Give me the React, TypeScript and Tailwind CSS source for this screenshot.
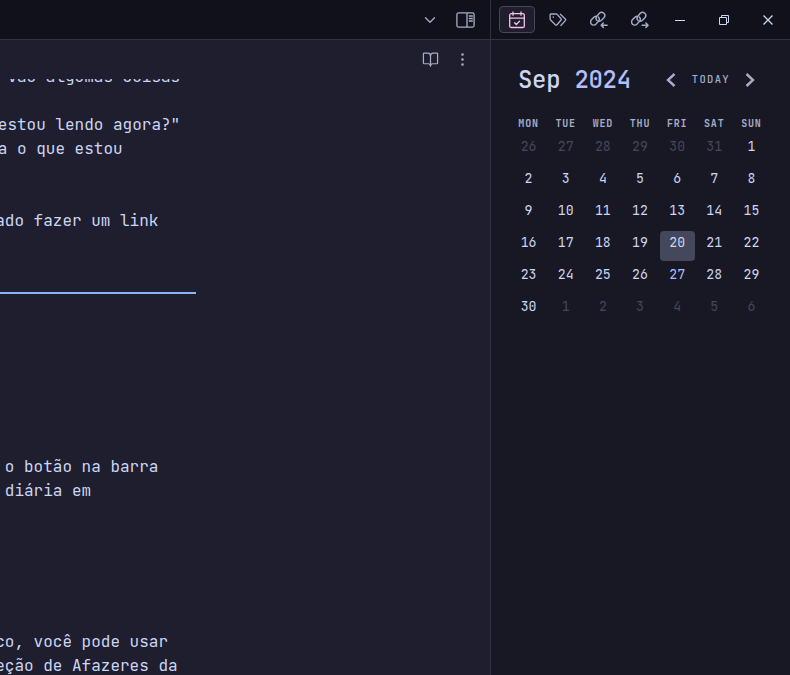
import React from "react";
import { BookOpen, ChevronDown, EllipsisVertical } from "lucide-react";

function SidebarIcon() {
  return (
    <svg width="19" height="16" viewBox="0 0 19 16" fill="none" stroke="currentColor" strokeWidth="1.3">
      <rect x="0.9" y="0.9" width="17.2" height="14.2" rx="1.5" />
      <path d="M11 1v14M12.8 4h4M12.8 6.5h4M12.8 9h4" />
    </svg>
  );
}

function CalendarIcon() {
  return (
    <svg width="18" height="18" viewBox="0 0 18 18" fill="none" stroke="currentColor" strokeWidth="1.3" strokeLinecap="round" strokeLinejoin="round">
      <rect x="1.7" y="2.7" width="14.6" height="13.8" rx="1.6" />
      <path d="M1.7 7.2h14.6M5 1v3.2M13 1v3.2M6.6 11.8l1.7 1.7 3.2-3.2" />
    </svg>
  );
}

function TagsIcon() {
  return (
    <svg width="18" height="18" viewBox="0 0 18 18" fill="none" stroke="currentColor" strokeWidth="1.3" strokeLinecap="round" strokeLinejoin="round">
      <path d="M1.1 3.9q0-.9.9-.9h5.1q.6 0 1 .4l4 4.4q.5.6 0 1.2l-4.3 5q-.6.5-1.2 0L1.6 9q-.5-.5-.5-1z" />
      <path d="M11.4 3.3l5.1 4.9q.6.6 0 1.2l-4.6 5.1" />
      <circle cx="4.3" cy="6.1" r="0.8" fill="currentColor" stroke="none" />
    </svg>
  );
}

function LinkIcon({ outgoing = false }: { outgoing?: boolean }) {
  return (
    <svg width="18" height="18" viewBox="0 0 100 100" fill="none" stroke="currentColor" strokeWidth="8" strokeLinecap="round" strokeLinejoin="round">
      <path d="M39 53A18 18 0 0 1 38 29L52 13A17 17 0 0 1 77 37L65 50Q59 56 52 57" />
      <path d="M46 33A18 18 0 0 1 47 57L33 73A17 17 0 0 1 8 49L20 36Q26 30 33 29" />
      {outgoing ? <path d="M62 79H95M83 67L95 79L83 91" /> : <path d="M95 79H62M74 67L62 79L74 91" />}
    </svg>
  );
}

function Toolbar() {
  return (
    <header className="flex h-10 shrink-0 border-b border-[#313244] bg-[#11111b] text-[#a6adc8]">
      <div className="flex w-[491px] shrink-0 items-center justify-end gap-[17px] border-r border-[#313244] pr-[15.5px]">
        <ChevronDown className="mt-px" size={18} strokeWidth={1.75} />
        <SidebarIcon />
      </div>
      <div className="flex flex-1 items-center">
        <div className="ml-2 flex h-[27px] w-9 items-center justify-center rounded-[4px] border border-[#45475a] bg-[#1e1e2e] text-[#f5c2e7]">
          <CalendarIcon />
        </div>
        <span className="mt-px ml-[14px]">
          <TagsIcon />
        </span>
        <div className="ml-[23px] flex gap-[23px]">
          <LinkIcon />
          <LinkIcon outgoing />
        </div>
        <svg className="ml-[25px] text-[#cdd6f4]" width="100" height="12" viewBox="0 0 100 12" fill="none" stroke="currentColor">
          <path d="M1 6.5h10" />
          <path d="M45.5 3.5h7v7h-7zM47.5 3.5v-2h7v7h-2" />
          <path d="M89.5 1.5l9 9M98.5 1.5l-9 9" strokeWidth="1.3" />
        </svg>
      </div>
    </header>
  );
}

function Editor() {
  return (
    <main className="flex w-[491px] shrink-0 flex-col overflow-hidden border-r border-[#313244] bg-[#1e1e2e]">
      <div className="flex h-[38px] shrink-0 items-center justify-end gap-[15px] pr-[19.5px] text-[#a6adc8]">
        <BookOpen size={17} strokeWidth={1.75} />
        <EllipsisVertical size={17} strokeWidth={1.75} />
      </div>
      <div className="mt-px min-h-0 flex-1 overflow-hidden whitespace-pre text-[16px] leading-6 text-[#cdd6f4]">
        <p className="-mt-[14px] ml-[7.4px]">vão algumas coisas</p>
        <div className="mt-6 -ml-[2.2px]">
          <p>estou lendo agora?"</p>
          <p>a o que estou</p>
        </div>
        <p className="mt-12 -ml-[4.8px]">ado fazer um link</p>
        <hr className="mt-[59px] w-[196px] border-t-2 border-[#89b4fa]" />
        <div className="mt-[161px] ml-[4.8px]">
          <p>o botão na barra</p>
          <p>diária em</p>
        </div>
        <div className="mt-[127px] -ml-[4.8px]">
          <p>co, você pode usar</p>
          <p>eção de Afazeres da</p>
        </div>
      </div>
    </main>
  );
}

const weekdays = ["MON", "TUE", "WED", "THU", "FRI", "SAT", "SUN"];
const days = Array.from({ length: 42 }, (_, i) => {
  const offset = i - 5;
  if (offset < 1) return { day: offset + 31, outside: true };
  if (offset > 30) return { day: offset - 30, outside: true };
  return { day: offset, outside: false };
});

function dayStyle(day: number, outside: boolean) {
  if (outside) return "text-[#45475a]";
  if (day === 20) return "bg-[#45475a] text-[#cdd6f4]";
  if (day === 27) return "text-[#b4befe]";
  return "text-[#cdd6f4]";
}

function Calendar() {
  return (
    <aside className="flex-1 bg-[#181825] pt-6 pr-5 pl-[19px]">
      <div className="flex h-8 items-center pr-[15px] pl-2 text-[#a6adc8]">
        <h1 className="text-[24px] leading-8 font-medium tracking-[-0.3px] whitespace-pre text-[#cdd6f4]">
          Sep <span className="text-[#b4befe]">2024</span>
        </h1>
        <svg className="ml-auto" width="10" height="14" viewBox="0 0 10 14" fill="none" stroke="currentColor" strokeWidth="2.4">
          <path d="M8.5 1L2 7l6.5 6" />
        </svg>
        <span className="mr-[15px] ml-[16px] text-[10.5px] font-medium tracking-[1.35px]">TODAY</span>
        <svg width="10" height="14" viewBox="0 0 10 14" fill="none" stroke="currentColor" strokeWidth="2.4">
          <path d="M1.5 1L8 7l-6.5 6" />
        </svg>
      </div>
      <div className="mt-5 grid grid-cols-7 text-center text-[10px] leading-[15px] font-bold tracking-[0.8px] text-[#a6adc8]">
        {weekdays.map((name) => (
          <span key={name}>{name}</span>
        ))}
      </div>
      <div className="mt-1 grid grid-cols-7 gap-y-[2px] text-center text-[13.2px]">
        {days.map(({ day, outside }, i) => (
          <span key={i} className={`mx-px h-[30px] rounded-[4px] leading-[23px] ${dayStyle(day, outside)}`}>
            {day}
          </span>
        ))}
      </div>
    </aside>
  );
}

export default function App() {
  return (
    <div className="flex h-screen w-full flex-col overflow-hidden font-['JetBrains_Mono','DejaVu_Sans_Mono',monospace]">
      <Toolbar />
      <div className="flex min-h-0 flex-1">
        <Editor />
        <Calendar />
      </div>
    </div>
  );
}
